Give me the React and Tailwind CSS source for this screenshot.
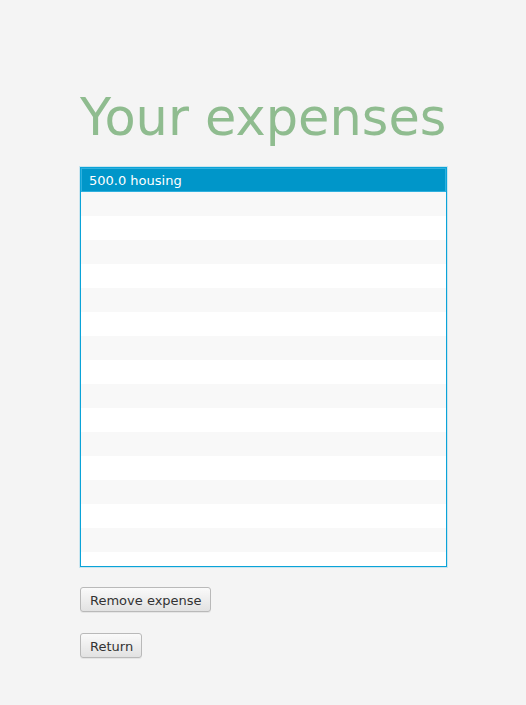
import React from "react";

const rows = Array.from({ length: 16 }, (_, i) => i);

const Button = ({ children }) => (
  <button className="h-[25px] pl-[9px] pr-[8px] pt-[2px] rounded-[3px] border border-[#b9b9b9] bg-gradient-to-b from-[#fafafa] to-[#e2e2e2] text-[13px] leading-none text-[#333] shadow-[0_1px_0_rgba(0,0,0,0.06)]">
    {children}
  </button>
);

export default function App() {
  return (
    <div className="min-h-screen bg-[#f4f4f4] font-['DejaVu_Sans',sans-serif]">
      <div className="pl-[80px] pt-[92px] w-[447px]">
        <h1 className="text-[51px] leading-none h-[51px] text-[#8fbc8f] whitespace-nowrap">Your expenses</h1>

        <div className="mt-[24px] h-[400px] w-[367px] border border-[#0aa3d8] bg-white shadow-[0_0_0_1px_rgba(10,163,216,0.18)] overflow-hidden">
          <div className="h-[24px] bg-[#0096c9] border border-[#2fb0de] flex items-center pl-[7px] pt-[2px] text-[13px] text-white">
            500.0 housing
          </div>
          {rows.slice(1).map((i) => (
            <div key={i} className={i % 2 === 1 ? "h-[24px] bg-[#f8f8f8]" : "h-[24px] bg-white"} />
          ))}
        </div>

        <div className="mt-[20px] flex flex-col items-start gap-[21px]">
          <Button>Remove expense</Button>
          <Button>Return</Button>
        </div>
      </div>
    </div>
  );
}
